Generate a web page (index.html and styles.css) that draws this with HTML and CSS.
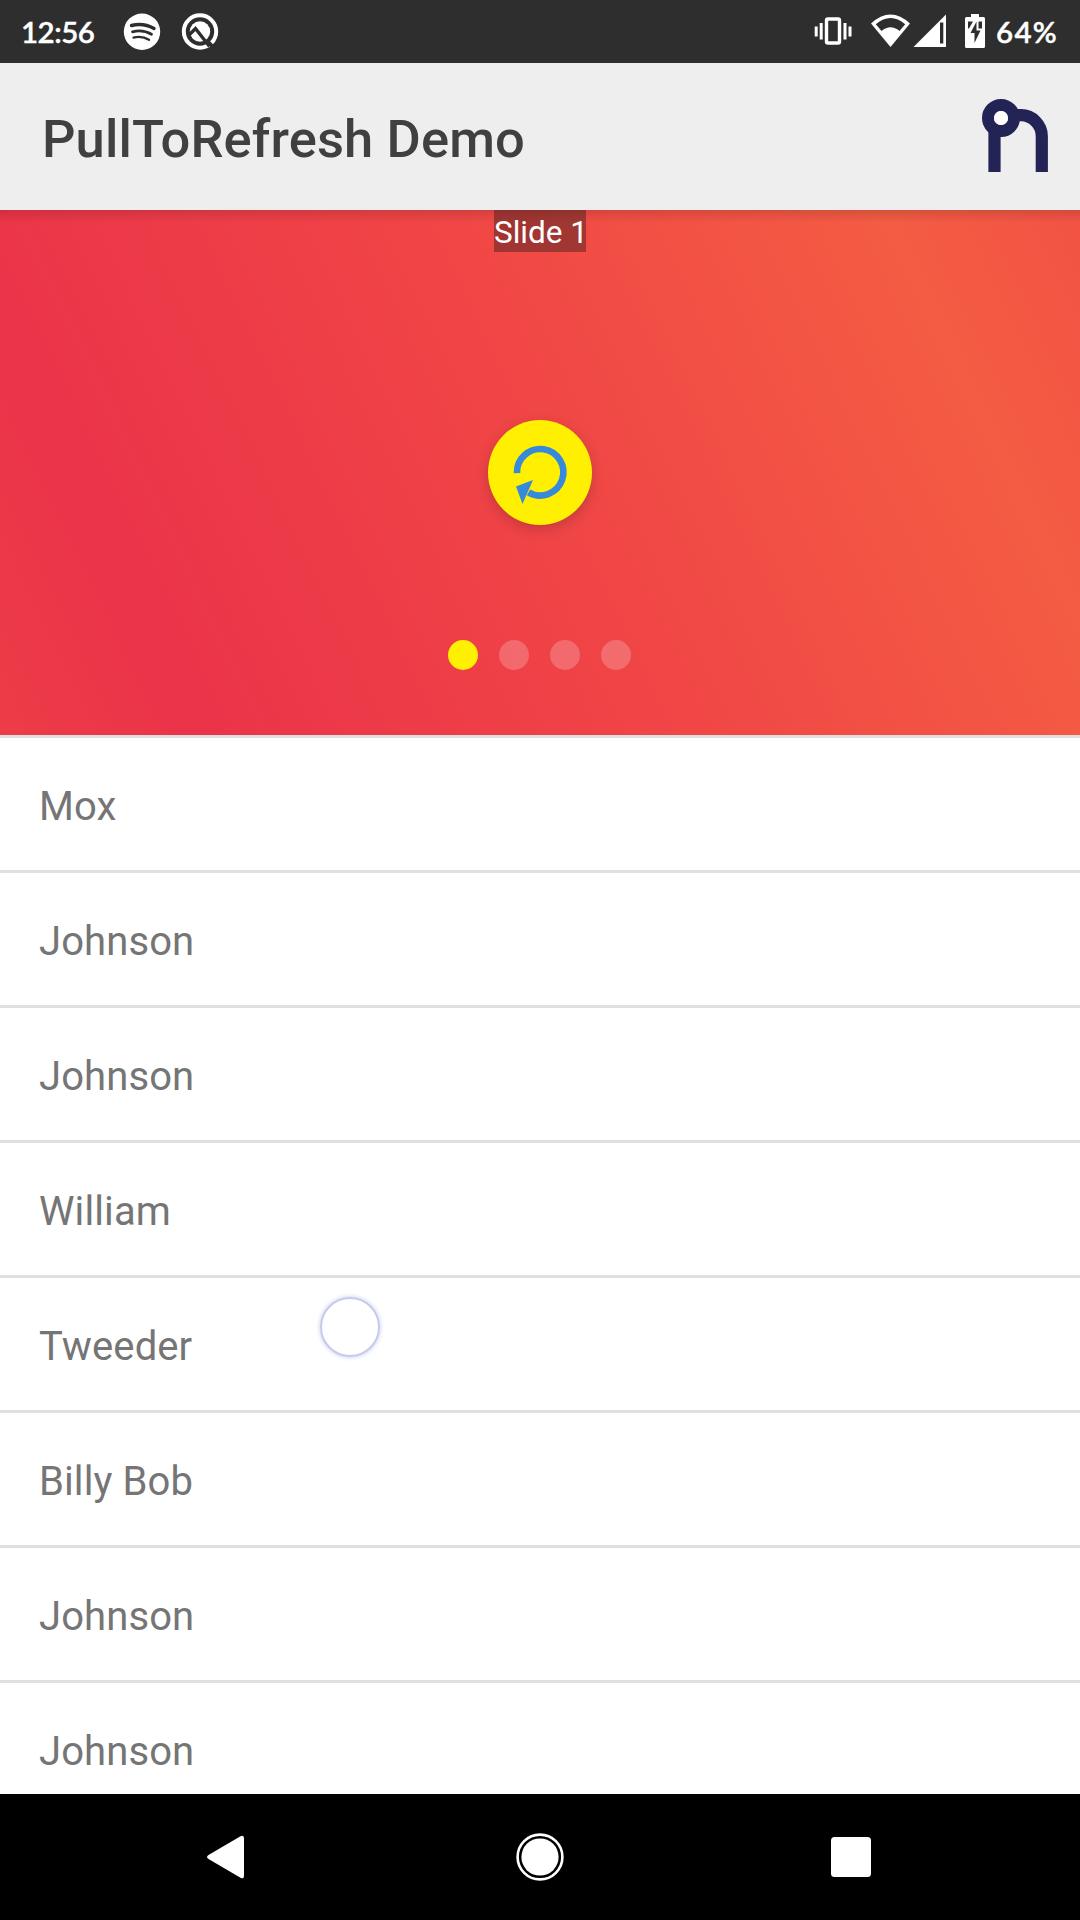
FILE: index.html
```html
<!DOCTYPE html>
<html lang="en">
<head>
<meta charset="utf-8">
<title>PullToRefresh Demo</title>
<link rel="stylesheet" href="styles.css">
</head>
<body>
<div class="screen">
  <header class="status">
    <span class="clock">12:56</span>
    <svg class="notices" width="100" height="63" viewBox="120 0 100 63">
      <circle cx="142" cy="31.7" r="18.2" fill="#fff"/>
      <g fill="none" stroke="#2e2e2e" stroke-linecap="round">
        <path d="M131.5 25.500q12-3 22.500 3" stroke-width="3.400"/>
        <path d="M132.500 31.800q10.500-2.500 19 2.500" stroke-width="2.800"/>
        <path d="M133.500 37.600q8.500-2 15.500 2.200" stroke-width="2.300"/>
      </g>
      <circle cx="200" cy="31.500" r="16.200" fill="none" stroke="#fff" stroke-width="4"/>
      <circle cx="200" cy="31.500" r="10.200" fill="#fff"/>
      <path d="M189 35l6.500-6.500 14 18" fill="none" stroke="#2e2e2e" stroke-width="3.400"/>
      <path d="M207.500 41l6.500 7" fill="none" stroke="#2e2e2e" stroke-width="3.400"/>
    </svg>
    <svg class="signals" width="180" height="63" viewBox="810 0 180 63">
      <rect x="826.500" y="19" width="13" height="24" rx="1.500" fill="none" stroke="#fff" stroke-width="3.400"/>
      <path d="M821.200 23v16.500M816.200 26.500v10M845 23v16.500M850 26.500v10" stroke="#fff" stroke-width="3"/>
      <path d="M871 23.500Q890.500 5.500 910 23.500L890.500 47z" fill="#fff"/>
      <path d="M875.800 24.300Q890.500 11.500 905.200 24.300L899.500 31Q890.500 23.500 881.500 31z" fill="#2e2e2e"/>
      <path d="M946 14.500V47H913.500z" fill="#fff"/>
      <path d="M940 22.500h3.300v21h-3.300z" fill="#2e2e2e"/>
      <path d="M971 14h8v3h4.500q1.500 0 1.500 1.500v28q0 1.500-1.500 1.500h-17q-1.500 0-1.500-1.500v-28q0-1.500 1.500-1.500h4.500z" fill="#fff"/>
      <path d="M968 21.500h5l-4 7h-1zM978.500 21.500h3.500v7h-3.500z" fill="#2e2e2e"/>
      <path d="M976.500 21.500v9h4l-6 12.500v-10h-4z" fill="#2e2e2e"/>
    </svg>
    <span class="battery">64%</span>
  </header>

  <div class="appbar">
    <h1 class="title">PullToRefresh Demo</h1>
    <svg class="logo" width="68" height="76" viewBox="981 98 68 76">
      <g fill="none" stroke="#232455" stroke-width="12.200">
        <circle cx="1001" cy="118" r="13" stroke-width="12"/>
        <path d="M994.500 128V172M1014 115.200H1021a21 21 0 0 1 20.800 21V172"/>
      </g>
      <circle cx="1001" cy="118" r="7" fill="#fff"/>
    </svg>
  </div>

  <section class="slide">
    <span class="label">Slide 1</span>
    <div class="refresh">
      <svg width="104" height="105" viewBox="488 420 104 105">
        <path d="M517 473.200A23.200 23.200 0 1 1 528.500 492.300" fill="none" stroke="#3689db" stroke-width="6.600"/>
        <path d="M516 486.500L533 480L522.500 504z" fill="#3689db"/>
      </svg>
    </div>
    <div class="dots">
      <i class="dot dot-on"></i><i class="dot"></i><i class="dot"></i><i class="dot"></i>
    </div>
  </section>

  <ul class="list">
    <li>Mox</li>
    <li>Johnson</li>
    <li>Johnson</li>
    <li>William</li>
    <li>Tweeder</li>
    <li>Billy Bob</li>
    <li>Johnson</li>
    <li>Johnson</li>
  </ul>

  <nav class="nav">
    <svg width="1080" height="126" viewBox="0 1794 1080 126" fill="#fff">
      <path d="M208.500 1855L240.500 1836.300Q244 1834.500 244 1838.500V1875.500Q244 1879.500 240.500 1877.700L208.500 1859Q205.500 1857 208.500 1855z"/>
      <circle cx="540" cy="1857" r="22.400" fill="none" stroke="#fff" stroke-width="2.600"/>
      <circle cx="540" cy="1857" r="18.600"/>
      <rect x="831" y="1837" width="40" height="40" rx="3.500"/>
    </svg>
  </nav>

  <div class="touch"></div>
</div>
</body>
</html>
```
FILE: styles.css
```css
body {
  margin: 0;
  background: #fff;
  font-family: Roboto, sans-serif;
}

.screen {
  position: relative;
  display: flex;
  flex-direction: column;
  width: 1080px;
  height: 1920px;
  overflow: hidden;
}

svg {
  display: block;
}

.status {
  display: flex;
  align-items: center;
  flex: none;
  height: 63px;
  padding: 0 20px 0 21px;
  background: #2e2e2e;
  color: #fff;
  font-family: Lato, sans-serif;
  font-size: 29.5px;
  font-weight: 600;
  -webkit-text-stroke: 0.4px #fff;
}

.clock {
  width: 99px;
  letter-spacing: -0.5px;
}

.signals {
  margin-left: auto;
}

.battery {
  width: 64px;
  margin-left: 6px;
  letter-spacing: 1.3px;
}

.appbar {
  display: flex;
  align-items: center;
  justify-content: space-between;
  flex: none;
  box-sizing: border-box;
  height: 147px;
  padding: 0 31px 0 42px;
  background: #eee;
}

.title {
  margin: 5px 0 0;
  color: #404040;
  font-size: 52.5px;
  font-weight: 500;
  line-height: 62px;
  letter-spacing: 0.12px;
}

.logo {
  margin-bottom: 2px;
}

.slide {
  display: flex;
  flex-direction: column;
  align-items: center;
  flex: none;
  height: 525px;
  background:
    linear-gradient(rgba(0, 0, 0, 0.12), transparent 13px),
    linear-gradient(64.4deg, #ed3c47 0, #eb3349 14.7%, #f04546 50%, #f45c43 85.2%, #f25344 100%);
}

.label {
  width: 92px;
  height: 42px;
  background: rgba(30, 20, 20, 0.38);
  color: #fff;
  font-size: 31.5px;
  line-height: 46px;
  text-align: center;
  white-space: nowrap;
}

.refresh {
  width: 104px;
  height: 105px;
  margin-top: 168px;
  border-radius: 50%;
  background: #ffef00;
  box-shadow: 0 4px 12px rgba(60, 30, 30, 0.25);
}

.dots {
  display: flex;
  gap: 21px;
  margin-top: 115px;
  margin-right: 1px;
}

.dot {
  width: 30px;
  height: 30px;
  border-radius: 50%;
  background: rgba(255, 255, 255, 0.21);
}

.dot-on {
  background: #ffef00;
}

.list {
  flex: 1;
  min-height: 0;
  margin: 0;
  padding: 0;
  overflow: hidden;
  list-style: none;
}

.list li {
  box-sizing: border-box;
  height: 135px;
  padding: 3px 0 0 39px;
  border-top: 3px solid #e0e0e0;
  color: #757575;
  font-size: 40px;
  line-height: 132px;
  letter-spacing: 0.1px;
}

.nav {
  flex: none;
  height: 126px;
  background: #000;
}

.touch {
  position: absolute;
  top: 1297px;
  left: 320px;
  box-sizing: border-box;
  width: 60px;
  height: 60px;
  border: 2.5px solid #c5caec;
  border-radius: 50%;
  box-shadow: 0 0 4px rgba(150, 160, 225, 0.6);
}
```
